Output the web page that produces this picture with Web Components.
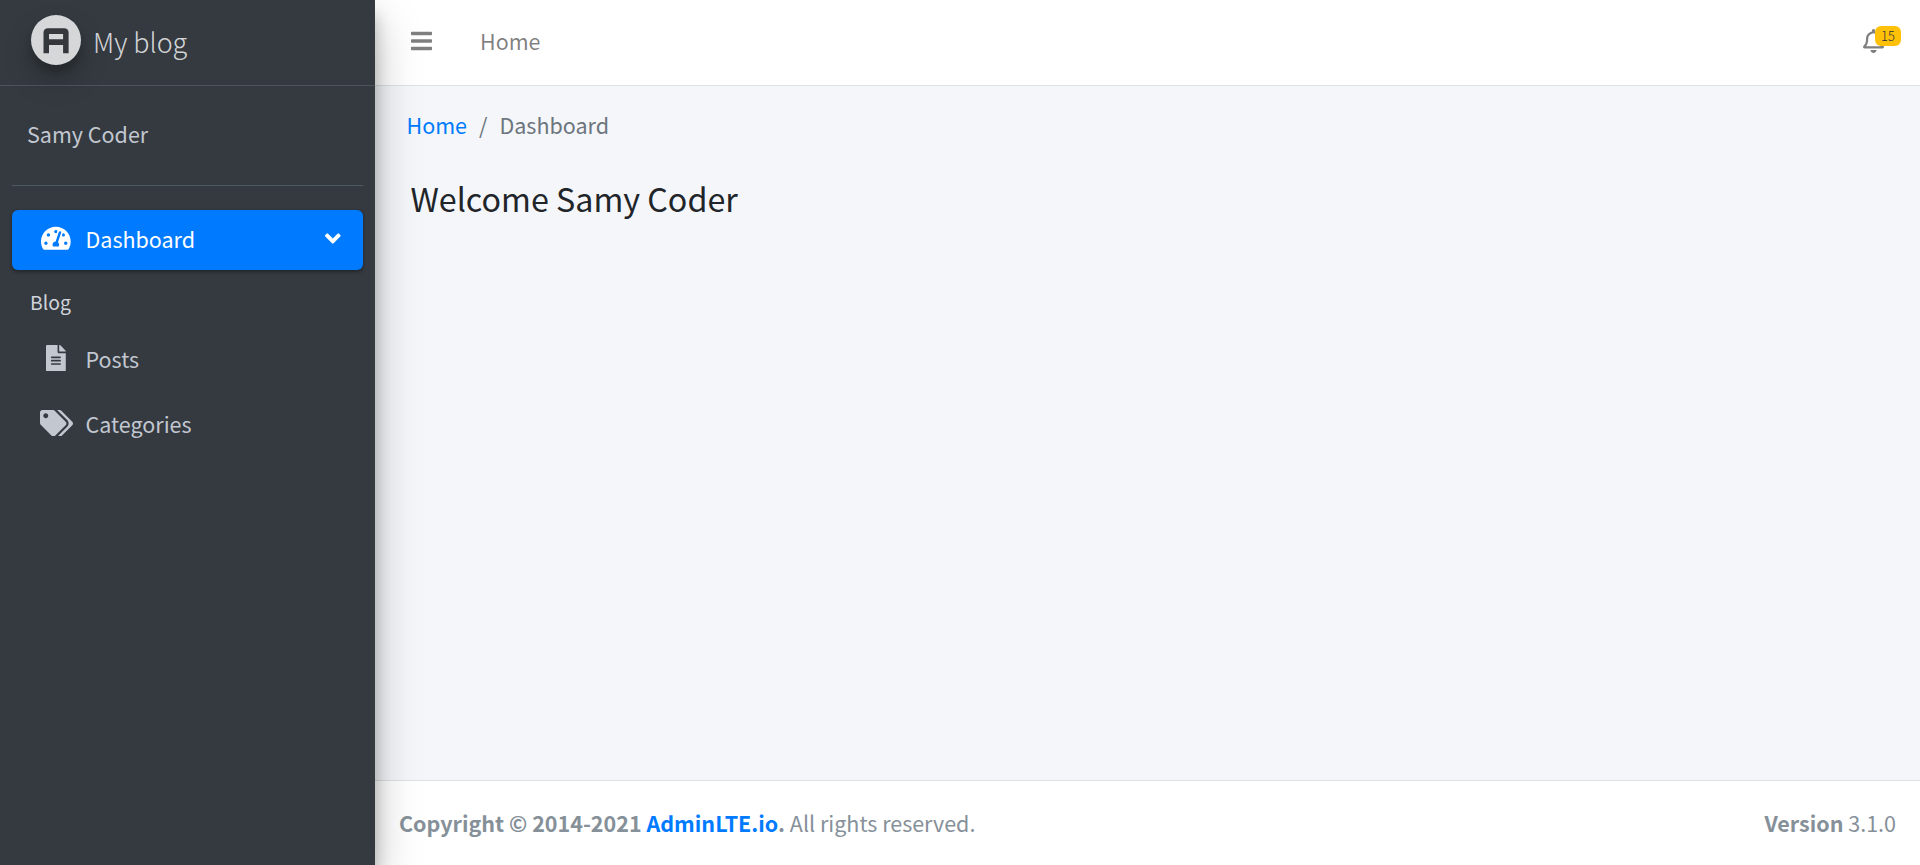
<!DOCTYPE html>
<html lang="en">
<head>
<meta charset="utf-8">
<title>My blog | Dashboard</title>
<style>
html,body{margin:0;height:100%}
body{font-family:"Noto Sans CJK SC","Noto Sans",sans-serif;font-size:21.5px;line-height:36px;color:#212529;overflow:hidden}
</style>
</head>
<body>
<blog-app></blog-app>
<script>
const ICONS = {
  dash: [576, 'M288 32C128.94 32 0 160.94 0 320c0 52.8 14.25 102.26 39.06 144.8 5.61 9.62 16.3 15.2 27.44 15.2h443c11.14 0 21.83-5.58 27.44-15.2C561.75 422.26 576 372.8 576 320c0-159.06-128.94-288-288-288zm0 64c14.71 0 26.58 10.13 30.32 23.65-1.11 2.26-2.64 4.23-3.45 6.67l-9.22 27.67c-5.13 3.49-10.97 6.01-17.64 6.01-17.67 0-32-14.33-32-32S270.33 96 288 96zM96 384c-17.67 0-32-14.33-32-32s14.33-32 32-32 32 14.33 32 32-14.33 32-32 32zm48-160c-17.67 0-32-14.33-32-32s14.33-32 32-32 32 14.33 32 32-14.33 32-32 32zm246.77-72.41l-61.33 184C343.13 347.33 352 364.54 352 384c0 11.72-3.38 22.55-8.88 32H232.88c-5.5-9.45-8.88-20.28-8.88-32 0-33.94 26.5-61.43 59.9-63.59l61.34-184.01c4.17-12.56 17.73-19.45 30.36-15.17 12.57 4.19 19.35 17.79 15.17 30.36zm14.66 57.2l15.52-46.55c3.47-1.29 7.13-2.23 11.05-2.23 17.67 0 32 14.33 32 32s-14.33 32-32 32c-11.38-.01-20.89-6.28-26.57-15.22zM480 384c-17.67 0-32-14.33-32-32s14.33-32 32-32 32 14.33 32 32-14.33 32-32 32z'],
  tags: [640, 'M497.941 225.941L286.059 14.059A48 48 0 0 0 252.118 0H48C21.49 0 0 21.49 0 48v204.118a48 48 0 0 0 14.059 33.941l211.882 211.882c18.744 18.745 49.136 18.746 67.882 0l204.118-204.118c18.745-18.745 18.745-49.137 0-67.882zM112 160c-26.51 0-48-21.49-48-48s21.49-48 48-48 48 21.49 48 48-21.49 48-48 48zm513.941 133.823L421.823 497.941c-18.745 18.745-49.137 18.745-67.882 0l-.36-.36L527.64 323.522c16.999-16.999 26.362-39.6 26.362-63.64s-9.362-46.641-26.362-63.64L331.397 0h48.721a48 48 0 0 1 33.941 14.059l211.882 211.882c18.745 18.745 18.745 49.137 0 67.882z'],
  file: [384, 'M224 136V0H24C10.7 0 0 10.7 0 24v464c0 13.3 10.7 24 24 24h336c13.3 0 24-10.7 24-24V160H248c-13.2 0-24-10.8-24-24zm64 236c0 6.6-5.4 12-12 12H108c-6.6 0-12-5.4-12-12v-8c0-6.6 5.4-12 12-12h168c6.6 0 12 5.4 12 12v8zm0-64c0 6.6-5.4 12-12 12H108c-6.6 0-12-5.4-12-12v-8c0-6.6 5.4-12 12-12h168c6.6 0 12 5.4 12 12v8zm0-72v8c0 6.6-5.4 12-12 12H108c-6.6 0-12-5.4-12-12v-8c0-6.6 5.4-12 12-12h168c6.6 0 12 5.4 12 12zm96-114.1v6.1H256V0h6.1c6.4 0 12.5 2.5 17 7l97.9 98c4.5 4.5 7 10.6 7 16.9z'],
  bars: [448, 'M16 132h416c8.837 0 16-7.163 16-16V76c0-8.837-7.163-16-16-16H16C7.163 60 0 67.163 0 76v40c0 8.837 7.163 16 16 16zm0 160h416c8.837 0 16-7.163 16-16v-40c0-8.837-7.163-16-16-16H16c-8.837 0-16 7.163-16 16v40c0 8.837 7.163 16 16 16zm0 160h416c8.837 0 16-7.163 16-16v-40c0-8.837-7.163-16-16-16H16c-8.837 0-16 7.163-16 16v40c0 8.837 7.163 16 16 16z'],
  bell: [448, 'M439.39 362.29c-19.32-20.76-55.47-51.99-55.47-154.29 0-77.7-54.48-139.9-127.94-155.16V32c0-17.67-14.32-32-31.98-32s-31.98 14.33-31.98 32v20.84C118.56 68.1 64.08 130.3 64.08 208c0 102.3-36.15 133.53-55.47 154.29-6 6.45-8.66 14.16-8.61 21.71.11 16.4 12.98 32 32.1 32h383.8c19.12 0 32-15.6 32.1-32 .05-7.55-2.61-15.27-8.61-21.71zM67.53 368c21.22-27.97 44.42-74.33 44.53-159.42 0-.2-.06-.38-.06-.58 0-61.86 50.14-112 112-112s112 50.14 112 112c0 .2-.06.38-.06.58.11 85.1 23.31 131.46 44.53 159.42H67.53zM224 512c35.32 0 63.97-28.65 63.97-64H160.03c0 35.35 28.65 64 63.97 64z'],
  down: [320, 'M143 352.3L7 216.3c-9.4-9.4-9.4-24.6 0-33.9l22.6-22.6c9.4-9.4 24.6-9.4 33.9 0l96.4 96.4 96.4-96.4c9.4-9.4 24.6-9.4 33.9 0l22.6 22.6c9.4 9.4 9.4 24.6 0 33.9l-136 136c-9.2 9.4-24.4 9.4-33.8 0z']
};

const define = (name, html) => {
  const tpl = document.createElement('template');
  tpl.innerHTML = html;
  customElements.define(name, class extends HTMLElement {
    constructor() {
      super();
      this.attachShadow({mode: 'open'}).append(tpl.content.cloneNode(true));
    }
  });
};

customElements.define('ui-icon', class extends HTMLElement {
  connectedCallback() {
    if (this.shadowRoot) return;
    const [w, d] = ICONS[this.getAttribute('name')];
    const size = +(this.getAttribute('size') || 24);
    this.attachShadow({mode: 'open'}).innerHTML =
      `<style>:host{display:block;flex:none}svg{display:block;fill:currentColor}</style>
       <svg viewBox="0 0 ${w} 512" width="${w / 512 * size}" height="${size}"><path d="${d}"/></svg>`;
  }
});

customElements.define('nav-item', class extends HTMLElement {
  connectedCallback() {
    if (this.shadowRoot) return;
    const active = this.hasAttribute('active');
    this.attachShadow({mode: 'open'}).innerHTML = `
      <style>
      :host{display:flex;align-items:center;box-sizing:border-box;height:60px;margin-bottom:5px;padding:0 22px 0 26.5px;border-radius:6px;color:#c2c7d0}
      :host([active]){padding-bottom:2px;background:#007bff;color:#fff;box-shadow:0 1.5px 4.5px rgba(0,0,0,.12),0 1.5px 3px rgba(0,0,0,.24);margin-bottom:11px}
      .ico{width:35px;display:flex;justify-content:center;margin:-2px 12px 0 0}
      span{flex:1}
      ui-icon.arrow{margin-top:-1px}
      </style>
      <div class="ico"><ui-icon name="${this.getAttribute('icon')}" size="26.4"></ui-icon></div>
      <span><slot></slot></span>${active ? '<ui-icon class="arrow" name="down" size="25"></ui-icon>' : ''}`;
  }
});

define('brand-logo', `
<style>
:host{display:block;width:50px;height:50px;border-radius:50%;opacity:.8;box-shadow:0 15px 30px rgba(0,0,0,.19),0 9px 9px rgba(0,0,0,.23)}
svg{display:block}
</style>
<svg width="50" height="50" viewBox="0 0 50 50"><circle cx="25" cy="25" r="25" fill="#fff"/><path fill="#34373a" fill-rule="evenodd" d="M12.500 38.300V17.800q0-4.500 4.500-4.500h16.100q4.500 0 4.500 4.500v20.500h-5.500v-8.200H18v8.200zM18 18.900v5.400h14.100v-5.400z"/></svg>`);

define('side-bar', `
<style>
:host{display:block;width:375px;height:100%;background:#343a40;box-shadow:0 21px 42px rgba(0,0,0,.25),0 15px 15px rgba(0,0,0,.22);position:relative;z-index:2}
.brand{display:flex;box-sizing:border-box;height:86px;padding:15px 0 0 31px;border-bottom:1px solid #4b545c;color:rgba(255,255,255,.8);font-size:26.9px;font-weight:300}
.brand span{margin:9px 0 0 12px}
.user{box-sizing:border-box;height:100px;margin:0 12px 24px;padding:30px 0 0 15px;border-bottom:1px solid #4f5962;color:#c2c7d0}
nav{margin:0 12px}
.head{height:36px;padding-left:18px;margin-bottom:12px;font-size:19.35px;line-height:42px;color:#d0d4db}
</style>
<div class="brand"><brand-logo></brand-logo><span>My blog</span></div>
<div class="user">Samy Coder</div>
<nav>
<nav-item icon="dash" active>Dashboard</nav-item>
<div class="head">Blog</div>
<nav-item icon="file">Posts</nav-item>
<nav-item icon="tags">Categories</nav-item>
</nav>`);

define('top-bar', `
<style>
:host{display:flex;align-items:flex-start;box-sizing:border-box;height:86px;padding:0 24px 0 36px;background:#fff;border-bottom:1px solid #dee2e6;color:rgba(0,0,0,.5)}
.bars{margin-top:29px}
.home{flex:1;margin:23px 0 0 48px}
.bell{position:relative;margin:29px 12px 0 0}
.badge{position:absolute;left:12px;top:-3px;width:26px;height:20px;border-radius:6px;background:#ffc107;color:#1f2d3d;font-size:12.9px;font-weight:300;line-height:20px;text-align:center}
</style>
<ui-icon class="bars" name="bars"></ui-icon><span class="home">Home</span>
<div class="bell"><ui-icon name="bell"></ui-icon><span class="badge">15</span></div>`);

define('bread-crumb', `
<style>:host{display:flex;gap:12px;color:#6c757d}a{color:#007bff}</style>
<a>Home</a><span>/</span><span>Dashboard</span>`);

define('page-footer', `
<style>
:host{display:flex;justify-content:space-between;box-sizing:border-box;height:85px;padding:24px 24px 0;background:#fff;border-top:1px solid #dee2e6;color:#869099}
a{color:#007bff}b{font-weight:700}
</style>
<div><b>Copyright © 2014-2021 <a>AdminLTE.io</a>.</b> All rights reserved.</div><div><b>Version</b> 3.1.0</div>`);

define('blog-app', `
<style>
:host{display:grid;grid-template-columns:375px 1fr;height:100vh}
.main{display:flex;flex-direction:column;background:#f4f6f9;min-width:0}
main{flex:1;padding:21px 31.5px}
h1{margin:34px 0 0 4px;font-size:32.25px;line-height:43px;font-weight:400}
</style>
<side-bar></side-bar>
<div class="main"><top-bar></top-bar>
<main><bread-crumb></bread-crumb><h1>Welcome Samy Coder</h1></main>
<page-footer></page-footer></div>`);
</script>
</body>
</html>
